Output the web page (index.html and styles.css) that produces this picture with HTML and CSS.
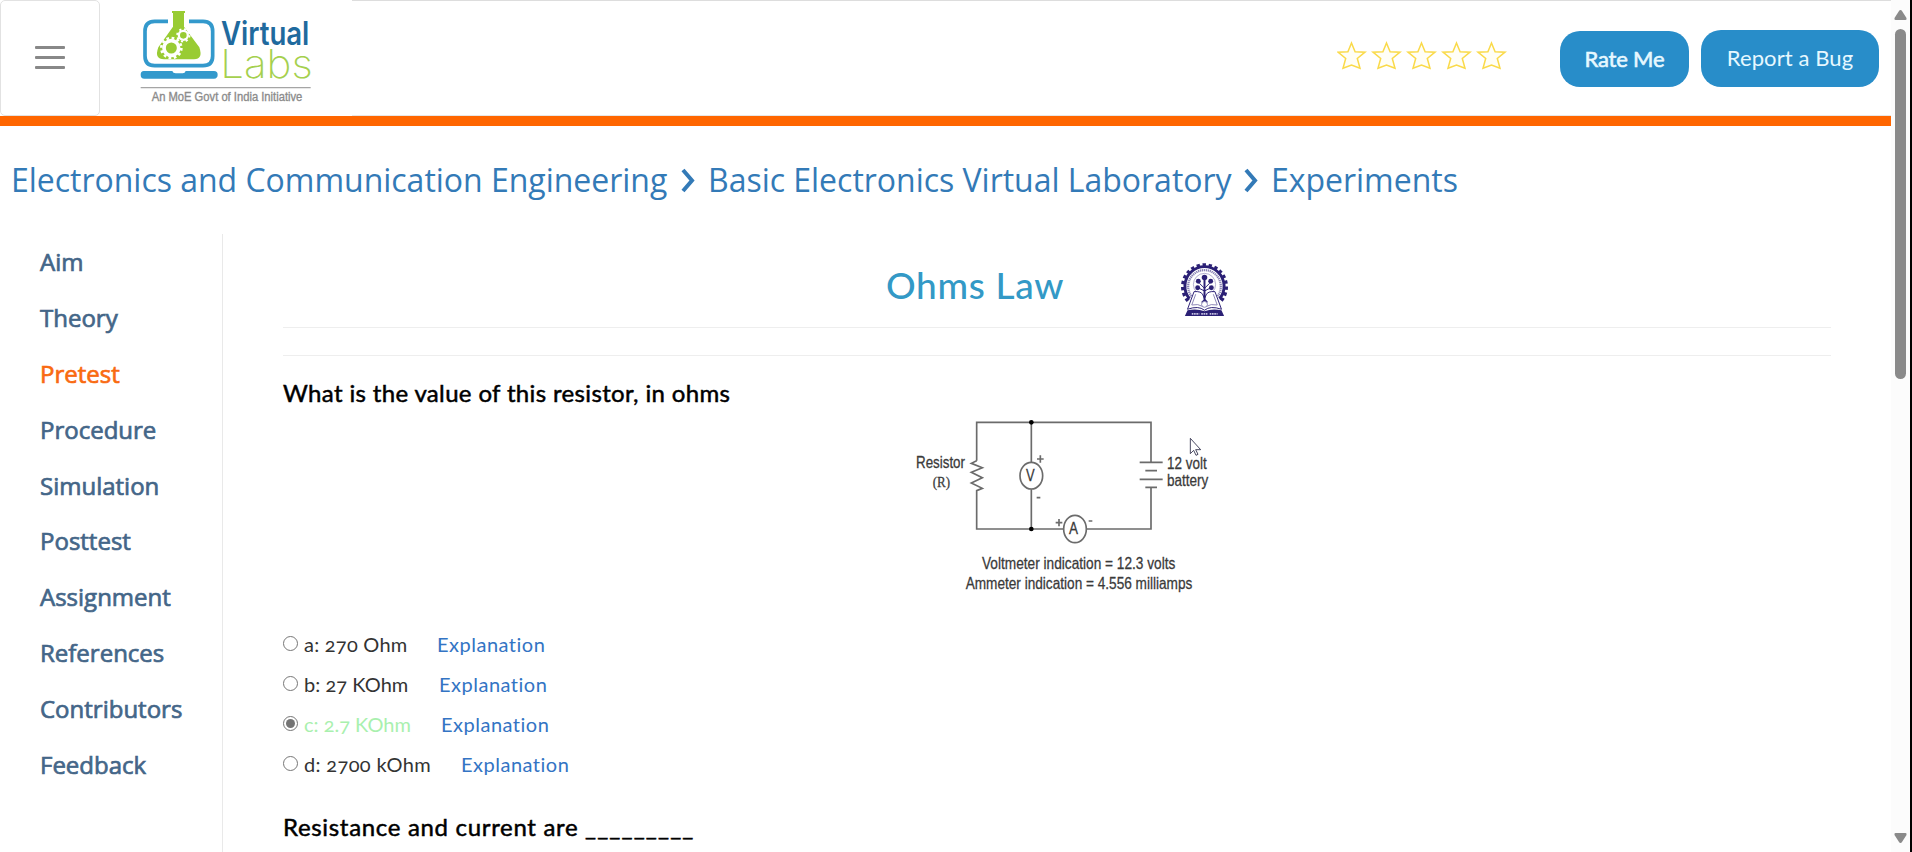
FILE: index.html
```html
<!DOCTYPE html>
<html lang="en">
<head>
<meta charset="utf-8">
<title>Ohms Law - Pretest</title>
<link rel="stylesheet" href="styles.css">
</head>
<body>
<div class="page">
  <header class="header">
    <button class="menu" aria-label="Menu"><span class="bar"></span><span class="bar"></span><span class="bar"></span></button>
    <svg class="logo" width="252" height="115" viewBox="298 0 756 345">
      <path d="M502 64H462Q433 64 433 94V168Q433 197 462 197H607Q636 197 636 168V94Q636 64 607 64H565" fill="none" stroke="#3399cc" stroke-width="11"/>
      <path d="M431 213H515Q517 220 525 220H546Q553 220 555 213H640Q651 213 651 224T640 236H431Q420 236 420 224T431 213Z" fill="#3399cc"/>
      <path d="M514 33H553V39H550V80L596 142Q608 178 580 178H490Q460 178 473 142L517 80V39H514Z" fill="#99cc33"/>
      <circle cx="512" cy="144" r="22" fill="none" stroke="#fff" stroke-width="11"/>
      <circle cx="512" cy="144" r="30" fill="none" stroke="#fff" stroke-width="8" stroke-dasharray="8 7.700"/>
      <circle cx="548" cy="106" r="13.500" fill="none" stroke="#fff" stroke-width="7"/>
      <circle cx="548" cy="106" r="18.500" fill="none" stroke="#fff" stroke-width="6" stroke-dasharray="6.500 8"/>
      <text class="logo-virtual" x="661" y="134" textLength="265" lengthAdjust="spacingAndGlyphs">Virtual</text>
      <text class="logo-labs" x="659" y="235" textLength="277" lengthAdjust="spacingAndGlyphs">Labs</text>
      <path d="M420 263H930" stroke="#a5a5a5" stroke-width="4"/>
      <text class="logo-tag" x="453" y="303" textLength="452" lengthAdjust="spacingAndGlyphs">An MoE Govt of India Initiative</text>
    </svg>
    <div class="header-right">
      <svg class="stars" width="170" height="30" viewBox="0 0 170 30">
        <defs><path id="star" d="M14.500 2 18.100 10.800 28 11.200 20.300 17.500 23 27.300 14.500 24 6 27.300 8.700 17.500 1 11.200 10.900 10.800Z"/></defs>
        <use href="#star"/><use href="#star" x="35"/><use href="#star" x="70"/><use href="#star" x="105"/><use href="#star" x="140"/>
      </svg>
      <button class="btn btn-rate"><span>Rate Me</span></button>
      <button class="btn btn-bug"><span>Report a Bug</span></button>
    </div>
  </header>
  <nav class="crumbs">
    <a class="crumb-a">Electronics and Communication Engineering</a>
    <svg class="chev" width="14" height="25" viewBox="0 0 14 25"><path d="M2 2 11 12.500 2 23"/></svg>
    <a class="crumb-b">Basic Electronics Virtual Laboratory</a>
    <svg class="chev" width="14" height="25" viewBox="0 0 14 25"><path d="M2 2 11 12.500 2 23"/></svg>
    <a class="crumb-c">Experiments</a>
  </nav>
  <div class="body">
    <aside class="side">
      <a>Aim</a><a>Theory</a><a class="active">Pretest</a><a>Procedure</a><a>Simulation</a><a>Posttest</a><a>Assignment</a><a>References</a><a>Contributors</a><a>Feedback</a>
    </aside>
    <main class="main">
      <div class="title-row">
        <h1>Ohms Law</h1>
        <svg class="emblem" width="47" height="54" viewBox="0 0 144 162">
          <path d="M22 114A66 66 0 1 1 122 114" fill="none" stroke="#2b2075" stroke-width="12" stroke-dasharray="10 8"/>
          <path d="M26 108A60 60 0 1 1 118 108" fill="none" stroke="#2b2075" stroke-width="9"/>
          <path d="M32 100A50 50 0 1 1 112 100" fill="none" stroke="#8a84b5" stroke-width="7" stroke-dasharray="4 2"/>
          <circle cx="72" cy="64" r="34" fill="none" stroke="#8a84b5" stroke-width="2"/>
          <path d="M40 86Q62 84 67 96L72 108 77 96Q82 84 104 86L124 140Q90 128 72 143 54 128 20 140Z" fill="#fff" stroke="#2b2075" stroke-width="3"/>
          <path d="M45 94 33 127Q52 122 68 132M99 94 111 127Q92 122 76 132" fill="none" stroke="#8a84b5" stroke-width="3"/>
          <path d="M56 60 72 76 88 60M52 74 72 84 92 74" fill="none" stroke="#2b2075" stroke-width="3"/>
          <path d="M72 46V112L64 120M72 110 80 120" fill="none" stroke="#2b2075" stroke-width="6"/>
          <g fill="#2b2075"><circle cx="72" cy="43" r="8.500"/><circle cx="53" cy="54" r="7.500"/><circle cx="91" cy="54" r="7.500"/><circle cx="51" cy="74" r="7.500"/><circle cx="93" cy="74" r="7.500"/></g>
          <circle cx="72" cy="125" r="9" fill="#fff" stroke="#8a84b5" stroke-width="3"/>
          <path d="M20 143Q50 138 72 146 94 138 124 143L132 161H12Z" fill="#2b2075"/>
          <path d="M33 154H56M62 154H82M88 154H112" stroke="#c5c1df" stroke-width="5" stroke-dasharray="5 2"/>
        </svg>
      </div>
      <section class="quiz">
        <h2 class="q q1">What is the value of this resistor, in ohms</h2>
        <svg class="circuit" width="400" height="210" viewBox="0 0 1200 630">
          <g fill="none" stroke="#6b6b6b" stroke-width="5">
            <path d="M350 182V67H873V186M873 262V387H680M610 387H350V272L367 265 334 249 367 233 334 217 367 203 334 190 350 182"/>
            <path d="M514 67V186M514 268V387M839 187H908M856 212H891M839 238H908M856 262H891"/>
            <ellipse cx="514" cy="227" rx="34" ry="40"/><ellipse cx="645" cy="387" rx="34" ry="41"/>
            <path d="M531 177H551M541 166V188M530 293H541M587 368H607M597 357V379M686 363H697"/>
          </g>
          <circle cx="514" cy="67" r="7"/><circle cx="514" cy="387" r="7"/>
          <g class="circuit-text">
            <text x="168" y="205" textLength="147" lengthAdjust="spacingAndGlyphs">Resistor</text>
            <text class="serif" x="218" y="260" textLength="52" lengthAdjust="spacingAndGlyphs">(R)</text>
            <text x="498" y="244" textLength="26" lengthAdjust="spacingAndGlyphs">V</text>
            <text x="627" y="401" textLength="27" lengthAdjust="spacingAndGlyphs">A</text>
            <text x="921" y="206" textLength="119" lengthAdjust="spacingAndGlyphs">12 volt</text>
            <text x="921" y="259" textLength="124" lengthAdjust="spacingAndGlyphs">battery</text>
            <text x="366" y="508" textLength="580" lengthAdjust="spacingAndGlyphs">Voltmeter indication = 12.3 volts</text>
            <text x="317" y="566" textLength="680" lengthAdjust="spacingAndGlyphs">Ammeter indication = 4.556 milliamps</text>
          </g>
          <path d="M991 115V161L1001 151 1008 166 1014 163 1007 149H1022Z" fill="#fff" stroke="#252542" stroke-width="2.500"/>
        </svg>
        <div class="opt"><input type="radio" name="q"><label class="la">a: 270 Ohm</label><a>Explanation</a></div>
        <div class="opt"><input type="radio" name="q"><label class="lb">b: 27 KOhm</label><a>Explanation</a></div>
        <div class="opt"><input type="radio" name="q" checked><label class="lc">c: 2.7 KOhm</label><a>Explanation</a></div>
        <div class="opt"><input type="radio" name="q"><label class="ld">d: 2700 kOhm</label><a>Explanation</a></div>
        <h2 class="q q2"><span>Resistance and current are</span><span class="blank">_________</span></h2>
      </section>
    </main>
  </div>
</div>
<div class="scroll">
  <svg width="13" height="10" viewBox="0 0 13 10"><path d="M6.500 0Q7.500 0 8 1L12.500 8Q13 10 11.500 10H1.500Q0 10 .5 8L5 1Q5.500 0 6.500 0Z" fill="#8a8a8a"/></svg>
  <div class="thumb"></div>
  <svg class="down" width="13" height="10" viewBox="0 0 13 10"><path d="M6.500 10Q7.500 10 8 9L12.500 2Q13 0 11.500 0H1.500Q0 0 .5 2L5 9Q5.500 10 6.500 10Z" fill="#8a8a8a"/></svg>
</div>
</body>
</html>
```
FILE: styles.css
```css
* { box-sizing: border-box; }
body { margin: 0; height: 852px; overflow: hidden; display: flex; background: #fff; font-family: Lato, sans-serif; color: #333; }
.page { width: 1891px; height: 852px; overflow: hidden; }

.header { height: 126px; display: flex; align-items: flex-start; border-bottom: 10px solid #ff6600; }
.menu { width: 100px; height: 116px; padding: 0 0 2px; display: flex; flex-direction: column; align-items: center; justify-content: center; gap: 7px; background: #fff; border: 1px solid #e2e2e2; border-radius: 5px; }
.bar { width: 30px; height: 3px; border-radius: 1px; background: #888; }
.logo { display: block; width: 252px; height: 115px; }
.logo-virtual { font: 600 96px Inter, sans-serif; fill: #1f6a9e; }
.logo-labs { font: 200 118px Inter, sans-serif; fill: #a5d04e; }
.logo-tag { font: 36px "Liberation Sans", sans-serif; fill: #8b8b8b; stroke: #8b8b8b; stroke-width: 1; }
.header-right { flex: 1; height: 116px; display: flex; align-items: flex-start; justify-content: flex-end; padding-right: 12px; border-top: 1px solid #ddd; border-bottom: 1px solid #e7e7e7; }
.stars { margin: 40px 53px 0 0; fill: #fffef6; stroke: #fada4a; stroke-width: 1.500; }
.btn { border: 0; padding: 0 0 2px; background: #288dc9; color: #e6f8ff; border-radius: 20px; font: 22px Lato, sans-serif; }
.btn-rate { width: 129px; height: 56px; margin: 30px 12px 0 0; letter-spacing: -.2px; -webkit-text-stroke: .6px #e6f8ff; }
.btn-bug { width: 178px; height: 57px; margin-top: 29px; letter-spacing: .1px; }

.crumbs { height: 108px; padding: 0 11px; display: flex; align-items: center; font: 32px/44px "Open Sans", sans-serif; color: #337ab7; }
.crumbs a { white-space: nowrap; flex: none; letter-spacing: -.02px; }
.crumb-a { width: 657px; }
.crumb-b { width: 523px; }
.chev { flex: none; margin: 0 13px; fill: none; stroke: #337ab7; stroke-width: 4; }

.body { display: flex; height: 618px; }
.side { width: 223px; border-right: 1px solid #e9e9e9; display: flex; flex-direction: column; }
.side a { height: 55.9px; padding-left: 40px; font: 24px/56px "Open Sans", sans-serif; color: #446688; -webkit-text-stroke: .7px #446688; }
.side .active { color: #f96a10; -webkit-text-stroke-color: #f96a10; }

.main { width: 1608px; padding-left: 60px; }
.title-row { height: 94px; display: flex; border-bottom: 1px solid #eee; padding-left: 603px; }
.title-row h1 { margin: 28px 0 0; width: 295px; font: 500 37px/46px Lato, sans-serif; letter-spacing: .7px; color: #3399c6; white-space: nowrap; }
.emblem { margin-top: 29px; }
.quiz { margin-top: 27px; border-top: 1px solid #eee; display: flex; flex-direction: column; }
.q { margin: 0; font: 24px/32px Lato, sans-serif; letter-spacing: .35px; color: #000; -webkit-text-stroke: .5px #000; white-space: nowrap; }
.q1 { margin-top: 21px; }
.circuit { margin: -9px 0 14px 577px; }
.circuit-text { font: 47px "Liberation Sans", sans-serif; fill: #3a3a3a; stroke: #3a3a3a; stroke-width: .8; }
.circuit-text .serif { font-family: "Liberation Serif", serif; font-size: 43px; }
.opt { height: 40px; display: flex; align-items: center; font-size: 20px; line-height: 26px; white-space: nowrap; }
.quiz .opt input { margin: 0 6px 1px 0; width: 15px; height: 15px; flex: none; accent-color: #757575; }
.opt label { flex: none; width: 133px; letter-spacing: .25px; font-feature-settings: "onum"; }
.opt a { color: #3374c4; letter-spacing: .5px; }
.opt .lb { width: 135px; letter-spacing: .05px; }
.opt .lc { width: 137px; letter-spacing: 0; color: #a9f0ae; }
.opt .ld { width: 157px; letter-spacing: .35px; }
.q2 { display: flex; margin-top: 27px; letter-spacing: .68px; }
.q2 span { width: 302px; }
.q2 .blank { letter-spacing: 1.150px; }

.scroll { width: 21px; height: 852px; padding-top: 10px; display: flex; flex-direction: column; align-items: center; background: #fcfcfc; border-right: 2px solid #000; }
.thumb { width: 11px; height: 350px; margin-top: 9px; border-radius: 6px; background: #8a8a8a; }
.down { margin-top: 454px; }
```
